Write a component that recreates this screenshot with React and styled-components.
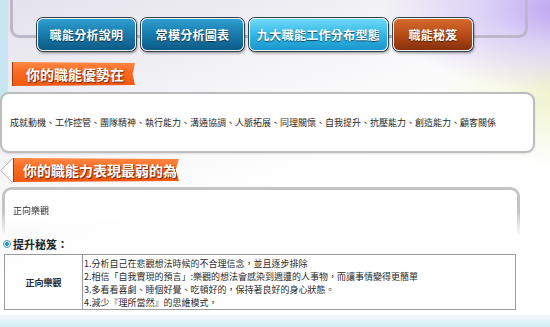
import React from 'react'
import styled, { createGlobalStyle } from 'styled-components';

const GlobalStyle = createGlobalStyle`
    body{
        margin:0;
        font-family:"Noto Sans CJK TC", "Noto Sans", sans-serif;
        color:#333;
    }
`;

const tabs = [
    {label:'職能分析說明', w:99, kind:'dark'},
    {label:'常模分析圖表', w:103, kind:'dark'},
    {label:'九大職能工作分布型態', w:139, kind:'light'},
    {label:'職能秘笈', w:80, kind:'active'},
];

const strengths = '成就動機、工作控管、團隊精神、執行能力、溝通協調、人脈拓展、同理關懷、自我提升、抗壓能力、創造能力、顧客關係';

const tips = [
    '1.分析自己在悲觀想法時候的不合理信念，並且逐步排除',
    '2.相信「自我實現的預言」:樂觀的想法會感染到週遭的人事物，而讓事情變得更簡單',
    '3.多看看喜劇、睡個好覺、吃頓好的，保持著良好的身心狀態。',
    '4.減少『理所當然』的思維模式，',
];

export default function App(){
    return (
        <>
            <GlobalStyle/>
            <Page>
                <Header>
                    <Tabs>
                        {tabs.map(t => (
                            <Tab key={t.label} $w={t.w} $kind={t.kind}>{t.label}</Tab>
                        ))}
                    </Tabs>
                </Header>

                <Ribbon>你的職能優勢在</Ribbon>
                <Panel>
                    <SmallText>{strengths}</SmallText>
                </Panel>

                <RibbonRow>
                    <svg width="13" height="25" viewBox="0 0 13 25">
                        <path d="M12.5 0.5 L0.8 12.5 L12.5 24.5" fill="#fff" stroke="#b0b0b0" strokeWidth="1"/>
                    </svg>
                    <Ribbon $wide>你的職能力表現最弱的為</Ribbon>
                </RibbonRow>
                <FadePanel>
                    <SmallText>正向樂觀</SmallText>
                </FadePanel>

                <TipTitle>
                    <Radio/>
                    提升秘笈：
                </TipTitle>
                <Table>
                    <tbody>
                        <tr>
                            <NameCell>正向樂觀</NameCell>
                            <TipCell>
                                {tips.map(t => <div key={t}>{t}</div>)}
                            </TipCell>
                        </tr>
                    </tbody>
                </Table>
                <Footer/>
            </Page>
        </>
    )
}

const Page = styled.div`
    width:550px;
    height:327px;
    overflow:hidden;
    display:flex;
    flex-direction:column;
    background:
        linear-gradient(#c6e5f0, #c6e5f0) 0 0 / 8px 112px no-repeat,
        radial-gradient(ellipse 190px 85px at 570px 8px, #b99ff0 0%, rgba(205,188,245,0.65) 45%, rgba(255,255,255,0) 100%),
        radial-gradient(ellipse 140px 75px at 575px 95px, #ebf1c2 0%, rgba(244,247,220,0.7) 50%, rgba(255,255,255,0) 100%),
        linear-gradient(160deg, #e4e2ec 0%, #eeedf3 20%, #f7f7f9 35%, #ffffff 55%);
`;

const Header = styled.div`
    position:relative;
    height:62px;
    padding:18px 0 0 37px;
    box-sizing:border-box;
    &::before{
        content:'';
        position:absolute;
        left:10px;
        top:-20px;
        width:512px;
        height:52px;
        border:3px solid #bcb8c7;
        border-radius:9px;
    }
`;

const Tabs = styled.div`
    position:relative;
    display:flex;
    gap:5px;
`;

const tabBg = {
    dark:'linear-gradient(#2f9fd0 0%, #1a7db0 45%, #0d5b86 100%)',
    light:'linear-gradient(#6fd8f6 0%, #33b8e6 50%, #1a96cc 100%)',
    active:'linear-gradient(#d66a2e 0%, #b64c18 50%, #86300c 100%)',
};

const Tab = styled.button`
    width:${p => p.$w}px;
    height:33px;
    padding:0;
    border:1px solid #eef6fa;
    border-radius:6px;
    background:${p => tabBg[p.$kind]};
    box-shadow:0 0 0 1px #34404a, 1px 2px 3px rgba(0,0,0,0.45);
    color:#fff;
    font-family:"Noto Sans CJK TC", sans-serif;
    font-weight:bold;
    font-size:12px;
    letter-spacing:0.3px;
    text-shadow:0 1px 1px rgba(0,0,0,0.6);
    cursor:pointer;
`;

const Ribbon = styled.div`
    align-self:flex-start;
    margin-left:${p => p.$wide ? '0' : '12px'};
    width:${p => p.$wide ? '166px' : '123px'};
    height:24px;
    box-sizing:border-box;
    padding-left:${p => p.$wide ? '9px' : '13px'};
    display:flex;
    align-items:center;
    background:linear-gradient(#ff8a44 0%, #fb6a22 40%, #f05810 100%);
    border-left:1px solid #a33a0a;
    color:#fff;
    font-weight:bold;
    font-size:14px;
    text-shadow:1px 1px 1px rgba(80,20,0,0.8);
    clip-path:polygon(0 0, 100% 4%, 98% 50%, 100% 96%, 0 100%);
`;

const Panel = styled.div`
    margin:6px 15px 0 0;
    height:61px;
    box-sizing:border-box;
    border:2px solid #bdbdbd;
    border-radius:9px;
    background:#fff;
    box-shadow:0 1px 2px rgba(0,0,0,0.12);
    display:flex;
    align-items:center;
    padding-left:8px;
`;

const SmallText = styled.div`
    font-size:9px;
    color:#2a2a2a;
    white-space:nowrap;
`;

const RibbonRow = styled.div`
    display:flex;
    align-items:center;
    margin-top:5px;
    height:24px;
`;

const FadePanel = styled.div`
    margin:5px 30px 0 2px;
    height:49px;
    box-sizing:border-box;
    border:3px solid #c4c4c4;
    border-bottom:none;
    border-radius:9px 9px 0 0;
    background:#fff;
    padding:14px 0 0 8px;
    -webkit-mask-image:linear-gradient(#000 50%, transparent 100%);
    mask-image:linear-gradient(#000 50%, transparent 100%);
`;

const TipTitle = styled.div`
    display:flex;
    align-items:center;
    gap:2px;
    height:14px;
    margin-top:1px;
    padding-left:3px;
    font-size:11px;
    font-weight:bold;
    color:#222;
`;

const Radio = styled.span`
    width:6px;
    height:6px;
    border-radius:50%;
    border:1px solid #3d9cc0;
    background:radial-gradient(circle, #2f8fb5 0 1.6px, #e6f6fb 2px);
`;

const Table = styled.table`
    margin:3px 0 0 4px;
    width:512px;
    border-collapse:collapse;
    border:1px solid #9a9a9a;
    font-size:9px;
    color:#2a2a2a;
`;

const NameCell = styled.td`
    width:77px;
    border:1px solid #9a9a9a;
    text-align:center;
    font-weight:bold;
    padding:0;
`;

const TipCell = styled.td`
    border:1px solid #9a9a9a;
    padding:2px 0 0 1px;
    line-height:13px;
    white-space:nowrap;
`;

const Footer = styled.div`
    margin-top:auto;
    height:12px;
    background:linear-gradient(#f2f9fc, #d3ecf7);
`;
